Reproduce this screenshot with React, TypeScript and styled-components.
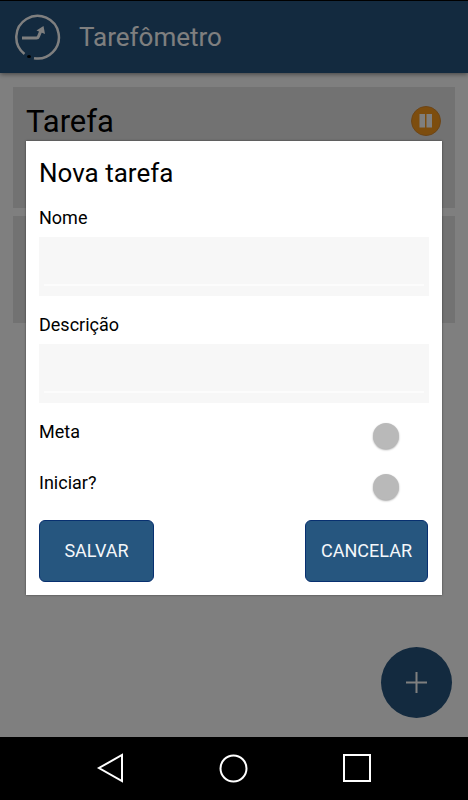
import React from "react";
import styled, { createGlobalStyle } from "styled-components";

const GlobalStyle = createGlobalStyle`
  * { box-sizing: border-box; }
  body { margin: 0; background: #000; font-family: Roboto, "Open Sans", sans-serif; }
  h1, h2, p { margin: 0; font-weight: 400; }
  button { font-family: inherit; border: 0; padding: 0; cursor: pointer; }
`;

const Device = styled.div`
  display: flex;
  flex-direction: column;
  min-height: 100vh;
  background: #000;
`;

const Screen = styled.div`
  position: relative;
  flex: 1;
  display: flex;
  flex-direction: column;
  background: #fff;
`;

const Header = styled.header`
  display: flex;
  align-items: center;
  gap: 18px;
  height: 73px;
  padding: 0 13px;
  background: #26547e;
  border-top: 1px solid #000;
  box-shadow: 0 1px 5px rgba(0, 0, 0, 0.5);
`;

const AppTitle = styled.h1`
  font-size: 26px;
  line-height: 32px;
  color: #fff;
`;

const TaskList = styled.main`
  flex: 1;
  display: flex;
  flex-direction: column;
  gap: 8px;
  padding: 14px 13px;
`;

const TaskCard = styled.article<{ $height: number }>`
  display: flex;
  align-items: flex-start;
  justify-content: space-between;
  min-height: ${(p) => p.$height}px;
  padding: 17px 14px 17px 13px;
  background: #e4e4e4;
`;

const TaskName = styled.h2`
  font-size: 31px;
  line-height: 36px;
  color: #000;
`;

const PauseButton = styled.button`
  display: block;
  width: 30px;
  height: 30px;
  margin-top: 2px;
  background: none;
`;

const AddButton = styled.button`
  position: absolute;
  right: 16px;
  bottom: 19px;
  width: 71px;
  height: 71px;
  display: grid;
  place-items: center;
  border-radius: 50%;
  background: #26547e;
`;

const Backdrop = styled.div`
  position: absolute;
  inset: 0;
  display: flex;
  align-items: center;
  padding: 0 26px 1px;
  background: rgba(0, 0, 0, 0.5);
`;

const Dialog = styled.form`
  flex: 1;
  display: flex;
  flex-direction: column;
  padding: 16px 13px 13px;
  background: #fff;
  box-shadow: 0 0 2px rgba(0, 0, 0, 0.5);
`;

const DialogTitle = styled.h2`
  font-size: 26px;
  line-height: 32px;
  margin-bottom: 17px;
  color: #000;
`;

const Field = styled.div`
  display: flex;
  flex-direction: column;
  gap: 7px;
  margin-bottom: 17px;
`;

const Label = styled.label`
  font-size: 18px;
  line-height: 24px;
  color: #000;
`;

const InputBox = styled.div`
  display: flex;
  height: 59px;
  padding: 0 5px 10px;
  background: #f7f7f7;
`;

const TextInput = styled.input`
  flex: 1;
  min-width: 0;
  border: 0;
  border-bottom: 2px solid #fcfcfc;
  padding: 0 4px;
  outline: 0;
  background: transparent;
  font: 18px Roboto, sans-serif;
`;

const SwitchGroup = styled.div`
  display: flex;
  flex-direction: column;
  gap: 27px;
  margin-bottom: 25px;
`;

const SwitchRow = styled.div`
  display: flex;
  align-items: center;
  justify-content: space-between;
  height: 24px;
  padding-right: 30px;
`;

const Switch = styled.input`
  appearance: none;
  width: 26px;
  height: 26px;
  margin: 8px 0 0;
  border-radius: 50%;
  background: #b9b9b9;
  box-shadow: 0 1px 2px rgba(0, 0, 0, 0.35);
  &:checked { background: #26547e; }
`;

const Actions = styled.div`
  display: flex;
  justify-content: space-between;
  padding-right: 1px;
`;

const ActionButton = styled.button`
  height: 62px;
  && { padding: 0 15px; border: 1px solid #083070; }
  min-width: 115px;
  border-radius: 6px;
  background: #26567f;
  color: #f4f7fa;
  font-size: 18px;
  line-height: 24px;
`;

const NavBar = styled.nav`
  display: flex;
  justify-content: center;
  gap: 93px;
  height: 63px;
  padding-top: 16px;
  background: #000;
`;

const NavButton = styled.button`
  width: 30px;
  height: 30px;
  background: none;
`;

const Icon = styled.svg`
  display: block;
  flex: none;
`;

const fields = [
  { id: "nome", label: "Nome" },
  { id: "descricao", label: "Descrição" },
];

const switches = [
  { id: "meta", label: "Meta" },
  { id: "iniciar", label: "Iniciar?" },
];

function ClockLogo() {
  return (
    <Icon width="48" height="48" viewBox="0 0 48 48" fill="none" aria-hidden="true">
      <path d="M21 45.200A21.300 21.300 0 1 0 11.500 41" stroke="#fff" strokeWidth="2.500" />
      <ellipse cx="16" cy="43.500" rx="2" ry="1.500" fill="#000" />
      <path d="M9 25h14.500q1.500 0 2-1.500l2.300-5.500" stroke="#fff" strokeWidth="3" />
      <path d="M23.500 17.500l7-4.500 1.500 8z" fill="#fff" />
    </Icon>
  );
}

export default function App() {
  return (
    <>
      <GlobalStyle />
      <Device>
        <Screen>
          <Header>
            <ClockLogo />
            <AppTitle>Tarefômetro</AppTitle>
          </Header>
          <TaskList>
            <TaskCard $height={121}>
              <TaskName>Tarefa</TaskName>
              <PauseButton type="button" aria-label="Pausar">
                <Icon width="30" height="30" viewBox="0 0 30 30">
                  <circle cx="15" cy="15" r="14.500" fill="#fa9a1c" stroke="#d98b30" />
                  <path d="M8.500 8h5.500v13.500H8.500zM15.500 8H21v13.500h-5.500z" fill="#fff" />
                </Icon>
              </PauseButton>
            </TaskCard>
            <TaskCard $height={107} />
          </TaskList>
          <AddButton type="button" aria-label="Adicionar tarefa">
            <Icon width="23" height="23" viewBox="0 0 23 23" stroke="#fff" strokeWidth="2">
              <path d="M11.500 1v21M1 11.500h21" />
            </Icon>
          </AddButton>
          <Backdrop>
            <Dialog role="dialog" aria-labelledby="dialog-title" onSubmit={(e) => e.preventDefault()}>
              <DialogTitle id="dialog-title">Nova tarefa</DialogTitle>
              {fields.map((f) => (
                <Field key={f.id}>
                  <Label htmlFor={f.id}>{f.label}</Label>
                  <InputBox>
                    <TextInput id={f.id} type="text" />
                  </InputBox>
                </Field>
              ))}
              <SwitchGroup>
                {switches.map((s) => (
                  <SwitchRow key={s.id}>
                    <Label htmlFor={s.id}>{s.label}</Label>
                    <Switch id={s.id} type="checkbox" role="switch" />
                  </SwitchRow>
                ))}
              </SwitchGroup>
              <Actions>
                <ActionButton type="submit">SALVAR</ActionButton>
                <ActionButton type="button">CANCELAR</ActionButton>
              </Actions>
            </Dialog>
          </Backdrop>
        </Screen>
        <NavBar>
          <NavButton type="button" aria-label="Voltar">
            <Icon width="30" height="30" viewBox="0 0 30 30" fill="none" stroke="#fff" strokeWidth="2">
              <path d="M26 2v26L3 15z" />
            </Icon>
          </NavButton>
          <NavButton type="button" aria-label="Início">
            <Icon width="30" height="30" viewBox="0 0 30 30" fill="none" stroke="#fff" strokeWidth="2">
              <circle cx="14.500" cy="15.500" r="13" />
            </Icon>
          </NavButton>
          <NavButton type="button" aria-label="Recentes">
            <Icon width="30" height="30" viewBox="0 0 30 30" fill="none" stroke="#fff" strokeWidth="2">
              <path d="M2 2h26v26H2z" />
            </Icon>
          </NavButton>
        </NavBar>
      </Device>
    </>
  );
}
